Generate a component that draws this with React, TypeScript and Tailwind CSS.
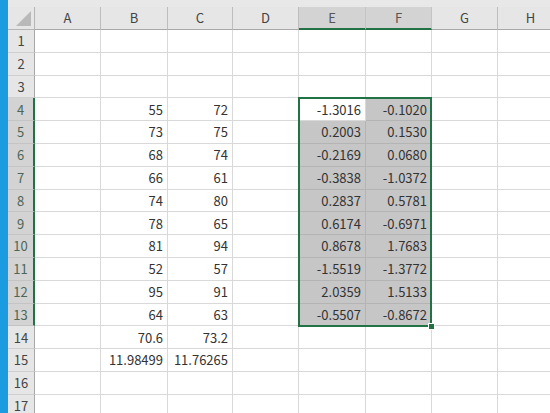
import React from "react";

const cols = ["A", "B", "C", "D", "E", "F", "G", "H"];
type Row = { b?: string; c?: string; e?: string; f?: string };
const data: Row[] = [
  {},
  {},
  {},
  { b: "55", c: "72", e: "-1.3016", f: "-0.1020" },
  { b: "73", c: "75", e: "0.2003", f: "0.1530" },
  { b: "68", c: "74", e: "-0.2169", f: "0.0680" },
  { b: "66", c: "61", e: "-0.3838", f: "-1.0372" },
  { b: "74", c: "80", e: "0.2837", f: "0.5781" },
  { b: "78", c: "65", e: "0.6174", f: "-0.6971" },
  { b: "81", c: "94", e: "0.8678", f: "1.7683" },
  { b: "52", c: "57", e: "-1.5519", f: "-1.3772" },
  { b: "95", c: "91", e: "2.0359", f: "1.5133" },
  { b: "64", c: "63", e: "-0.5507", f: "-0.8672" },
  { b: "70.6", c: "73.2" },
  { b: "11.98499", c: "11.76265" },
  {},
  {},
];

export default function App() {
  return (
    <div
      className="w-[550px] h-[413px] overflow-hidden flex bg-white text-[13px] text-[#333]"
      style={{ fontFamily: '"Noto Sans CJK JP", "Noto Sans", sans-serif' }}
    >
      <div className="w-[8px] shrink-0 bg-[#1b9be0]" />
      <div className="relative flex-1 flex flex-col">
        <div className="h-[7px] shrink-0 bg-[#e8e8e8]" />
        <div className="grid grid-cols-[27px_66px_67px_65px_66px_67px_66px_66px_66px] grid-rows-[23px] auto-rows-[22.8px]">
          <div className="relative bg-[#e6e6e6] border-r border-b border-[#b5b5b5]">
            <svg className="absolute right-[3px] bottom-[3px]" width="15" height="15" viewBox="0 0 15 15">
              <polygon points="15,0 15,15 0,15" fill="#b9b9b9" />
            </svg>
          </div>
          {cols.map((c) => {
            const sel = c === "E" || c === "F";
            return (
              <div
                key={c}
                className={
                  sel
                    ? "flex items-center justify-center bg-[#d3d3d3] text-[#555] border-r border-[#c4c4c4] border-b-2 border-b-[#217346]"
                    : "flex items-center justify-center bg-[#e6e6e6] text-[#444] border-r border-b border-[#bdbdbd] border-b-[#a8a8a8]"
                }
              >
                {c}
              </div>
            );
          })}
          {data.map((r, i) => {
            const rn = i + 1;
            const sel = rn >= 4 && rn <= 13;
            return (
              <React.Fragment key={rn}>
                <div
                  className={
                    sel
                      ? "flex items-center justify-center bg-[#d3d3d3] text-[#4e6657] border-b border-[#c4c4c4] border-r-2 border-r-[#217346]"
                      : "flex items-center justify-center bg-[#e6e6e6] text-[#444] border-b border-[#cfcfcf] border-r border-r-[#a8a8a8]"
                  }
                >
                  {rn}
                </div>
                {cols.map((c) => {
                  let v = "";
                  if (c === "B") v = r.b ?? "";
                  if (c === "C") v = r.c ?? "";
                  if (c === "E") v = r.e ?? "";
                  if (c === "F") v = r.f ?? "";
                  const gray = sel && (c === "F" || (c === "E" && rn !== 4));
                  return (
                    <div
                      key={c}
                      className={
                        gray
                          ? "flex items-center justify-end pr-[4px] bg-[#c6c6c6] border-r border-b border-[#b4b4b4]"
                          : "flex items-center justify-end pr-[4px] border-r border-b border-[#d9d9d9]"
                      }
                    >
                      {v}
                    </div>
                  );
                })}
              </React.Fragment>
            );
          })}
        </div>
        <div className="absolute left-[290px] top-[97.4px] w-[134px] h-[230px] border-2 border-[#217346] pointer-events-none" />
        <div className="absolute left-[420px] top-[323px] w-[7px] h-[7px] bg-[#217346] border border-white" />
      </div>
    </div>
  );
}
